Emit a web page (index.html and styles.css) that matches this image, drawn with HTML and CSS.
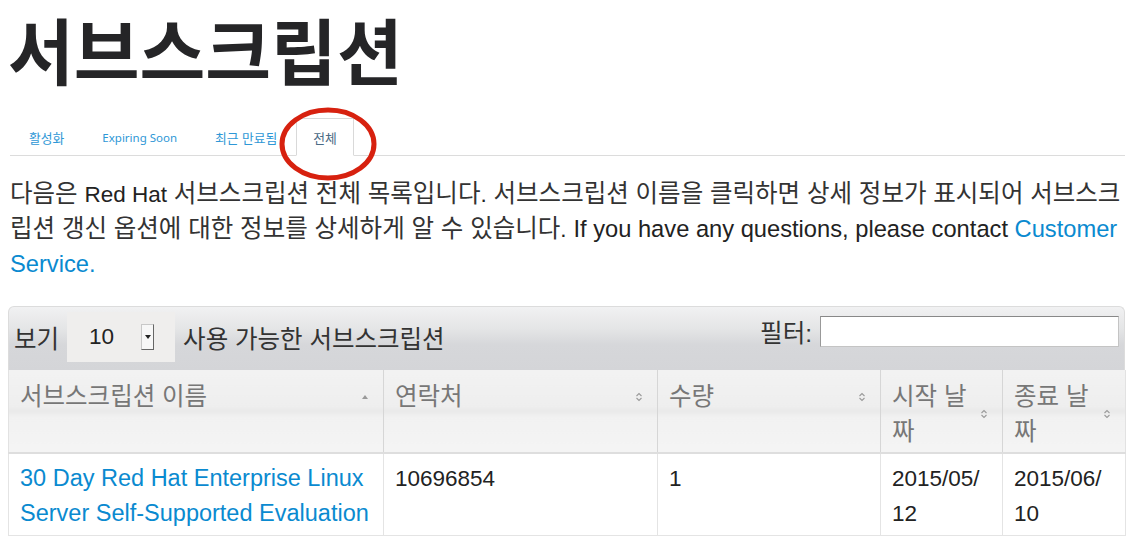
FILE: index.html
```html
<!DOCTYPE html>
<html lang="ko">
<head>
<meta charset="utf-8">
<title>서브스크립션</title>
<link rel="stylesheet" href="styles.css">
</head>
<body>
<h1 class="title">서브스크립션</h1>
<div class="tabs-wrap">
  <ul class="tabs">
    <li class="tab"><a href="#">활성화</a></li>
    <li class="tab"><a href="#" class="tab-en">Expiring Soon</a></li>
    <li class="tab"><a href="#">최근 만료됨</a></li>
    <li class="tab active"><a href="#">전체</a></li>
  </ul>
  <svg class="circle" width="104" height="80" viewBox="0 0 104 80"><ellipse cx="52" cy="40" rx="46" ry="34" fill="none" stroke="#d7210f" stroke-width="5"/></svg>
</div>
<p class="intro">다음은 <span class="en">Red Hat</span> 서브스크립션 전체 목록입니다<span class="en">.</span> 서브스크립션 이름을 클릭하면 상세 정보가 표시되어 서브스크립션 갱신 옵션에 대한 정보를 상세하게 알 수 있습니다<span class="en">.</span> <span class="en en-l">If you have any questions, please contact <a href="#">Customer Service.</a></span></p>
<div class="dt">
  <div class="dt-toolbar">
    <div class="length">
      <span>보기</span>
      <span class="select"><span class="sel-val en">10</span><span class="sel-btn"><svg width="6" height="4" viewBox="0 0 6 4"><path d="M0 0H6L3 4Z" fill="#222"/></svg></span></span>
      <span>사용 가능한 서브스크립션</span>
    </div>
    <label class="filter">필터: <span class="filter-input"></span></label>
  </div>
  <table class="grid">
    <colgroup>
      <col class="c1"><col class="c2"><col class="c3"><col class="c4"><col class="c5">
    </colgroup>
    <thead>
      <tr>
        <th><div class="th-in"><span class="th-txt">서브스크립션 이름</span><span class="sort"><svg width="8" height="6" viewBox="0 0 8 6"><path d="M1 5H7L4 1Z" fill="#9a9a9a"/></svg></span></div></th>
        <th><div class="th-in"><span class="th-txt">연락처</span><span class="sort"><svg width="8" height="10" viewBox="0 0 8 10"><path d="M1.5 4L4 1.5L6.5 4M1.5 6L4 8.5L6.5 6" fill="none" stroke="#9a9a9a" stroke-width="1.1"/></svg></span></div></th>
        <th><div class="th-in"><span class="th-txt">수량</span><span class="sort"><svg width="8" height="10" viewBox="0 0 8 10"><path d="M1.5 4L4 1.5L6.5 4M1.5 6L4 8.5L6.5 6" fill="none" stroke="#9a9a9a" stroke-width="1.1"/></svg></span></div></th>
        <th><div class="th-in"><span class="th-txt">시작 날짜</span><span class="sort"><svg width="8" height="10" viewBox="0 0 8 10"><path d="M1.5 4L4 1.5L6.5 4M1.5 6L4 8.5L6.5 6" fill="none" stroke="#9a9a9a" stroke-width="1.1"/></svg></span></div></th>
        <th><div class="th-in"><span class="th-txt">종료 날짜</span><span class="sort"><svg width="8" height="10" viewBox="0 0 8 10"><path d="M1.5 4L4 1.5L6.5 4M1.5 6L4 8.5L6.5 6" fill="none" stroke="#9a9a9a" stroke-width="1.1"/></svg></span></div></th>
      </tr>
    </thead>
    <tbody>
      <tr>
        <td><a href="#" class="row-link">30 Day Red Hat Enterprise Linux Server Self-Supported Evaluation</a></td>
        <td>10696854</td>
        <td>1</td>
        <td>2015/05/<wbr>12</td>
        <td>2015/06/<wbr>10</td>
      </tr>
    </tbody>
  </table>
</div>
</body>
</html>
```
FILE: styles.css
```css
body {
  margin: 8px;
  font-family: "Liberation Sans", "Noto Sans CJK KR", sans-serif;
  color: #333;
  background: #fff;
}
a { color: #0a8ad0; text-decoration: none; }
.en { font-size: 22.5px; line-height: 1; color: #222; }
.en-l { font-size: 23.7px; }
.en a { color: #0a8ad0; }

.title {
  margin: 0 0 30px 0;
  font-family: "Noto Sans CJK KR", sans-serif;
  font-weight: 700;
  font-size: 71.5px;
  line-height: 80px;
  color: #252527;
}

.tabs-wrap { position: relative; }
.tabs {
  list-style: none;
  margin: 0 0 0 2px;
  padding: 0;
  display: flex;
  border-bottom: 1px solid #dcdcdc;
  width: 1115px;
  height: 37px;
}
.tab {
  display: flex;
  align-items: center;
  padding: 0 18px;
  margin-bottom: -1px;
  border: 1px solid transparent;
  border-bottom: none;
}
.tab a {
  color: #2e97d6;
  font-family: "Noto Sans", "Noto Sans CJK KR", sans-serif;
  font-size: 12.8px;
}
.tab a.tab-en { font-size: 11.5px; }
.tab.active {
  background: #fff;
  border-color: #d9d9d9;
  border-bottom: 1px solid #fff;
  padding: 0 16px;
}
.tab.active a { color: #4a6a85; }
.circle {
  position: absolute;
  left: 268px;
  top: -14px;
}

.intro {
  margin: 20px 0 25px 2px;
  font-size: 24.5px;
  line-height: 35px;
  width: 1117px;
}

.dt { width: 1117px; }
.dt-toolbar {
  height: 63px;
  border: 1px solid #dcdcdc;
  border-bottom: none;
  border-radius: 6px 6px 0 0;
  background: linear-gradient(to bottom, #f1f1f2 0%, #e4e5e6 35%, #d6d7da 60%, #d4d5d8 100%);
  display: flex;
  justify-content: space-between;
  align-items: flex-start;
  font-size: 24.5px;
}
.length {
  display: flex;
  align-items: center;
  gap: 8px;
  padding: 5px 0 0 5px;
}
.select {
  width: 108px;
  height: 50px;
  background: #efeeed;
  display: flex;
  align-items: center;
  box-sizing: border-box;
  padding-left: 22px;
}
.sel-val { width: 52px; }
.sel-btn {
  width: 13px;
  height: 26px;
  background: #f7f7f7;
  border: 1px solid #c8c8c8;
  border-right-color: #666;
  border-bottom-color: #666;
  display: flex;
  align-items: center;
  justify-content: center;
  box-sizing: border-box;
}
.filter {
  display: flex;
  align-items: center;
  gap: 8px;
  padding: 7px 5px 0 0;
  color: #333;
}
.filter-input {
  width: 299px;
  height: 31px;
  box-sizing: border-box;
  background: #fff;
  border: 1px solid #c4c4c4;
  border-top-color: #888;
  border-left-color: #999;
}

.grid {
  width: 1117px;
  border-collapse: collapse;
  table-layout: fixed;
  font-size: 22.5px;
  line-height: 35px;
}
.c1 { width: 375px; }
.c2 { width: 274px; }
.c3 { width: 223px; }
.c4 { width: 122px; }
.c5 { width: 123px; }
.grid th {
  font-weight: normal;
  font-size: 24.5px;
  text-align: left;
  color: #777;
  vertical-align: top;
  padding: 9px 14px 0 11px;
  height: 73px;
  box-sizing: content-box;
  border-left: 1px solid #d6d6d6;
  border-bottom: 2px solid #dedede;
  background: linear-gradient(to bottom, #f2f2f2 0%, #eeeeee 45%, #e9e9e9 50%, #f1f1f1 58%, #f4f4f4 100%);
}
.grid th:first-child { border-left: 1px solid #e2e2e2; }
.grid th:last-child { border-right: 1px solid #e2e2e2; }
.th-in {
  display: flex;
  align-items: center;
  justify-content: space-between;
  gap: 8px;
}
.th-txt { flex: 1; }
.sort { display: flex; align-items: center; }
.grid td {
  vertical-align: top;
  padding: 7px 10px 4px 11px;
  border: 1px solid #e4e4e4;
  border-top: none;
  color: #222;
  background: #fff;
}
.row-link { font-size: 23.5px; }
```
